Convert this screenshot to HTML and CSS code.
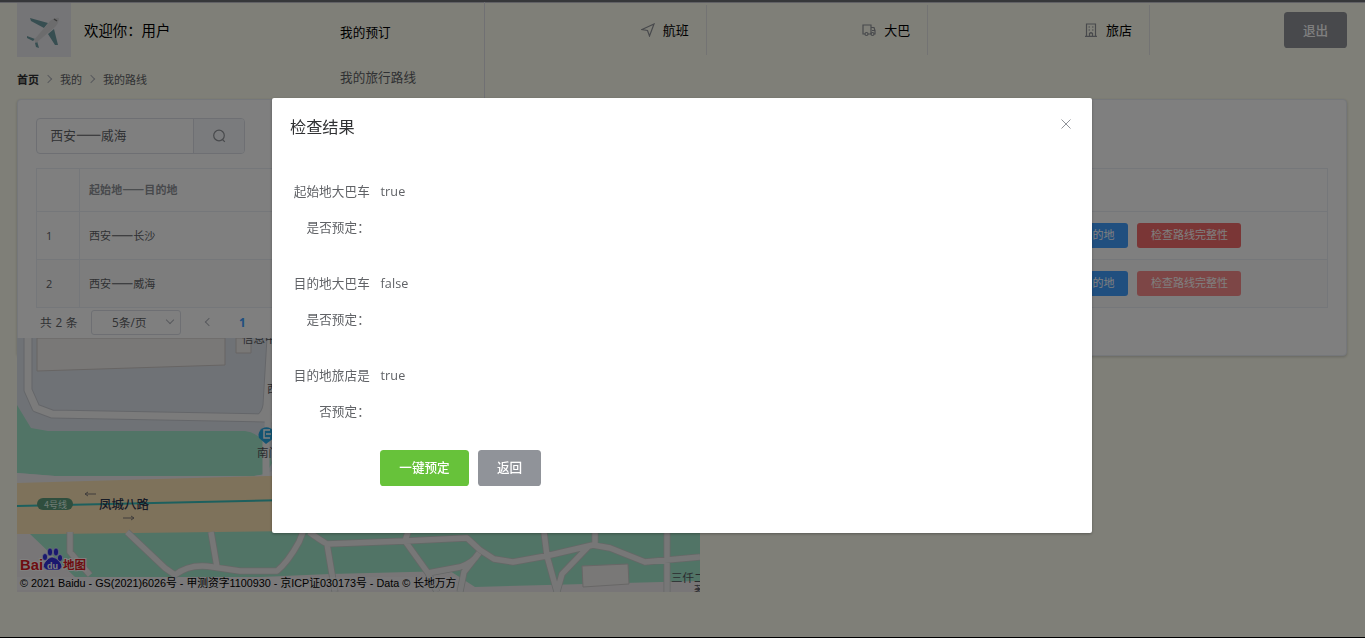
FILE: index.html
```html
<!DOCTYPE html>
<html lang="zh-CN">
<head>
<meta charset="utf-8">
<title>我的路线</title>
<link rel="stylesheet" href="styles.css">
</head>
<body>
<div class="page">
  <header class="header">
    <svg class="avatar" viewBox="0 0 54 54">
      <rect width="54" height="54" fill="#eaeaee"/>
      <path d="M13 15 L31 20 L27 25 L14 18Z M37 26 L41 42 L38 42 L31 31Z M10 33 L18 36 L16 38 L10 35Z M20 38 L22 45 L19 44 L18 40Z" fill="#6f9ca3"/>
      <path d="M17 37 L33 18 Q38 14 42 15 Q42 20 38 24 L19 40 Z" fill="#d9d9db"/>
      <path d="M37 16 L40 18" stroke="#777" stroke-width="1.5"/>
    </svg>
    <span class="welcome">欢迎你：用户</span>
    <nav class="submenu"><a class="sub-active">我的预订</a><a>我的旅行路线</a></nav>
    <nav class="menu">
      <a><svg class="icon" viewBox="0 0 14 14"><path d="M1 6.500 13 1 8.500 13 6.500 7.500Z"/></svg>航班</a>
      <a><svg class="icon" viewBox="0 0 14 14"><path d="M3 11H1V2h8v9H6M9 4.500h3l1 3V11H12M10 7.500h3"/><circle cx="4.500" cy="11" r="1.500"/><circle cx="10.500" cy="11" r="1.500"/></svg>大巴</a>
      <a><svg class="icon" viewBox="0 0 14 14"><path d="M1 13.400h12M2.500 13V1h9v12M5.500 13v-2.500q1.500-1.500 3 0V13M4.500 4h1.500M8 4h1.500M4.500 7h1.500M8 7h1.500"/></svg>旅店</a>
    </nav>
    <button class="btn info logout">退出</button>
  </header>
  <nav class="crumbs"><b>首页</b><i class="arrow"></i><span>我的</span><i class="arrow"></i><span>我的路线</span></nav>
  <main class="card">
    <div class="search">
      <div class="search-input">西安<span class="dash">——</span>威海</div>
      <div class="search-btn"><svg class="icon" viewBox="0 0 14 14"><circle cx="7" cy="6.500" r="5.300"/><path d="m10.500 10.500 2.300 2.300"/></svg></div>
    </div>
    <div class="table">
      <div class="row head"><div class="num"></div><div class="route">起始地<span class="dash">——</span>目的地</div></div>
      <div class="row"><div class="num">1</div><div class="route">西安<span class="dash">——</span>长沙</div><div class="ops"><span class="mini blue">目的地</span><span class="mini red">检查路线完整性</span></div></div>
      <div class="row striped"><div class="num">2</div><div class="route">西安<span class="dash">——</span>威海</div><div class="ops"><span class="mini blue">目的地</span><span class="mini red disabled">检查路线完整性</span></div></div>
    </div>
    <div class="pager"><span class="total">共 2 条</span><span class="select">5条/页<i class="arrow down"></i></span><i class="arrow prev"></i><b class="current">1</b></div>
  </main>
  <section class="map">
    <svg viewBox="17 338 683 254">
      <rect x="17" y="338" width="683" height="254" fill="#dfe5ec"/>
      <path d="M17 405 31 428 48 431H245Q260 433 268 448L272 463 266 474 254 476H55L17 473Z" fill="#a3e8cc"/>
      <path d="M17 473 55 476H254L266 474 274 470V484L17 484Z" fill="#f1eff0"/>
      <path d="M37 338H225V365L37 371Z M236 338h15v15h-15z" fill="#f3f0ee" stroke="#cfcac8"/>
      <g fill="none" stroke-linejoin="round">
        <path d="M28 338V390L36 408 52 414 265 418Q276 418 282 425M271 338 267 405Q266 413 260 418" stroke="#c9ccd3" stroke-width="9"/>
        <path d="M28 338V390L36 408 52 414 265 418Q276 418 282 425M271 338 267 405Q266 413 260 418M269 380 268 430M281 418V478M282 340V420" stroke="#f6f6f6" stroke-width="7"/>
        <path d="M266 432V476" stroke="#f6f6f6" stroke-width="7"/>
      </g>
      <path d="M17 483 268 476 700 466V534H17Z" fill="#fce4b6"/>
      <path d="M17 506 700 491" stroke="#3bc0bd" stroke-width="2"/>
      <path d="M17 534H700V592H17Z" fill="#f0edee"/>
      <path d="M30 534 75 577H260L330 574 450 571 475 587 700 581V531H300L54 534Z" fill="#a3e8cc"/>
      <g class="roads-edge"><use href="#roads"/></g>
      <g class="roads-fill"><path id="roads" d="M70 532V552L90 575M127 532 165 568 175 575Q190 563 213 567L240 571 277 571Q288 562 299 542L303 532M211 532 217 567M309 532Q320 540 327 544L405 541 408 532M327 544 335 592M405 541 428 573 460 567Q473 563 479 553M405 541 467 538 480 550 494 559 513 562 546 556 593 545 610 548 645 562 700 557M544 532 547 556 557 592M588 547 562 574 557 592M595 532V546M667 532V592M479 553 464 572 460 592M428 573 437 592"/></g>
      <path d="M582 566 628 564 629 584 583 587Z" fill="#f3f0ee" stroke="#d0cecd"/>
      <rect x="37" y="498" width="36" height="12" rx="6" fill="#5e9c7c"/>
      <g class="map-label"><text x="44" y="508" class="line-label">4号线</text><text x="99" y="509" class="road-label">凤城八路</text><text x="242" y="343">信息中</text><text x="267" y="393">西</text><text x="257" y="457">南门</text><text x="671" y="582">三仟二</text><text x="694" y="594" class="tiny">著</text></g>
      <path d="M96 494H85l3-2m-3 2 3 2M123 518h11l-3-2m3 2-3 2" fill="none" stroke="#807b78"/>
      <path d="M266 444 259 438A8 8 0 1 1 274 438Z" fill="#27a9e5"/><path d="M270 430h-6v8h6m-4-4h5" fill="none" stroke="white" stroke-width="1.500"/>
      <g class="logo"><text x="20" y="570" textLength="23" lengthAdjust="spacingAndGlyphs">Bai</text><text x="63" y="569" class="logo-cn">地图</text></g>
      <g fill="#3431df" stroke="white" stroke-width=".6"><ellipse cx="45" cy="557" rx="2.600" ry="3.500"/><ellipse cx="50" cy="552" rx="2.700" ry="4"/><ellipse cx="56" cy="552" rx="2.700" ry="4"/><ellipse cx="60" cy="558" rx="2.600" ry="3.500"/><path d="M52 557Q56 557 60 562 64 567 59 570H47Q41 567 45 562 49 557 52 557Z"/></g>
      <text x="47" y="569" class="du">du</text>
    </svg>
    <div class="copyright">© 2021 Baidu - GS(2021)6026号 - 甲测资字1100930 - 京ICP证030173号 - Data © 长地万方</div>
  </section>
</div>
<div class="overlay">
  <div class="dialog">
    <div class="dialog-head"><span>检查结果</span><svg class="close" viewBox="0 0 10 10"><path d="m.5.5 9 9M9.500.5.5 9.500"/></svg></div>
    <div class="form">
      <div class="item"><label>起始地大巴车是否预定：</label><span>true</span></div>
      <div class="item"><label>目的地大巴车是否预定：</label><span>false</span></div>
      <div class="item"><label>目的地旅店是否预定：</label><span>true</span></div>
      <div class="actions"><button class="btn success">一键预定</button><button class="btn info">返回</button></div>
    </div>
  </div>
</div>
</body>
</html>
```
FILE: styles.css
```css
* { box-sizing: border-box; }
body { margin: 0; height: 638px; overflow: hidden; background: #fffff0; font: 12.6px "Open Sans", "Noto Sans CJK SC", sans-serif; color: #606266; }
.page { height: 638px; padding: 1px 18px 0 17px; border-top: 2px solid #6c6e74; border-bottom: 1px solid #000; box-shadow: inset 0 1px #c3c2cb; position: relative; }
.header { display: flex; height: 54px; color: #000; }
.avatar { width: 54px; height: 54px; }
.welcome { width: 269px; padding-left: 13px; line-height: 56px; font-size: 14.4px; }
.submenu { width: 145px; height: 96px; margin-top: -1px; padding-top: 8px; border-right: 1px solid #e0e0e6; display: flex; flex-direction: column; color: #606266; flex: none; line-height: 45px; letter-spacing: .1px; }
.sub-active { color: #000; }
.menu { display: flex; }
.menu a { width: 221.7px; height: 50px; margin-top: 2px; border-right: 1px solid #e6e6e6; display: flex; align-items: center; justify-content: flex-end; padding: 0 17px 1px 0; gap: 8px; font-size: 13px; }
.icon { width: 14px; height: 14px; fill: none; stroke: #909399; stroke-width: 1.2; }
.menu .icon { margin-top: 1px; }
.btn { height: 36px; padding: 0 0 2px; border: 0; border-radius: 3.6px; color: #fff; font: 500 12.6px "Open Sans", "Noto Sans CJK SC", sans-serif; white-space: nowrap; }
.info { background: #909399; }
.success { background: #67c23a; }
.logout { margin: 9px 0 0 auto; width: 63px; }
.crumbs { display: flex; align-items: center; height: 16px; margin-top: 14px; font-size: 11px; }
.crumbs b { color: #303133; }
.arrow { width: 6px; height: 6px; border: solid #b0b3bb; border-width: 1px 1px 0 0; transform: rotate(45deg); margin: 0 9px 0 6px; flex: none; }
.card { height: 257px; margin-top: 12px; padding: 18px; background: #fff; border: 1px solid #ebeef5; border-radius: 4px; box-shadow: 0 1px 3px rgba(0,0,0,.2); }
.search { display: flex; width: 209px; height: 36px; border: 1px solid #dcdfe6; border-radius: 4px; line-height: 32px; overflow: hidden; }
.search-input { width: 156px; padding-left: 13.5px; font-family: "Noto Sans CJK SC", sans-serif; letter-spacing: .1px; }
.dash { letter-spacing: 0; -webkit-text-stroke: .3px currentColor; }
.search-btn { flex: 1; background: #f5f7fa; border-left: 1px solid #dcdfe6; display: grid; place-items: center; }
.table { margin-top: 14px; border: 1px solid #ebeef5; border-bottom: 0; font-size: 11px; width: 1292px; }
.row { display: flex; height: 48px; border-bottom: 1px solid #ebeef5; align-items: center; }
.head { height: 43px; color: #909399; font-weight: 700; }
.striped { background: #fafafa; }
.num { width: 43px; height: 100%; border-right: 1px solid #ebeef5; padding: 0 0 1px 9px; display: flex; align-items: center; }
.route { padding: 0 0 2px 9px; width: 987px; font-family: "Noto Sans CJK SC", sans-serif; letter-spacing: .1px; }
.ops { display: flex; gap: 9px; }
.mini { height: 25px; line-height: 24px; border-radius: 3px; color: #fff; text-align: center; text-indent: 1px; }
.blue { width: 61px; background: #409eff; }
.red { width: 104px; background: #f56c6c; }
.disabled { background: #fa8c8c; }
.pager { display: flex; align-items: center; height: 28px; font-size: 11.8px; padding-left: 4px; }
.total { width: 51px; padding-bottom: 1px; word-spacing: .6px; }
.select { width: 90px; height: 25px; border: 1px solid #dcdfe6; border-radius: 3px; padding: 0 7px 1px 20px; display: flex; align-items: center; justify-content: space-between; }
.down { transform: rotate(135deg); margin: -3px 0 0; }
.prev { transform: rotate(-135deg); margin: 0 27px 0 25px; }
.current { color: #409eff; padding-bottom: 1px; }
.map { position: absolute; left: 17px; top: 336px; width: 683px; height: 254px; overflow: hidden; }
.map svg { display: block; width: 683px; height: 254px; }
#roads { fill: none; stroke-linejoin: round; }
.roads-edge { stroke: #cbcfcd; stroke-width: 7; }
.roads-fill { stroke: #efefef; stroke-width: 5.4; }
.map-label { fill: #54565d; font: 11.5px "Noto Sans CJK SC", sans-serif; }
.road-label { fill: #2f374d; font-size: 12.5px; font-weight: 500; }
.line-label { fill: #dff7e9; font-size: 9px; }
.tiny { font-size: 10px; }
.logo { fill: #dd1a22; stroke: #fff; stroke-width: 2; paint-order: stroke; font: 700 14px "Liberation Sans", sans-serif; }
.logo-cn { font: 700 11.5px "Noto Sans CJK SC", sans-serif; }
.du { fill: #fff; font: 700 9px "Liberation Sans", sans-serif; }
.copyright { position: absolute; left: 0; bottom: 2px; height: 13px; padding-left: 3px; font: 10.8px/13px "Liberation Sans", "Noto Sans CJK SC", sans-serif; color: #000; background: rgba(255,255,255,.35); white-space: nowrap; }
.overlay { position: fixed; inset: 0; background: rgba(0,0,0,.5); display: flex; justify-content: center; align-items: flex-start; }
.dialog { width: 820px; height: 435px; margin: 98px 1px 0 0; background: #fff; border-radius: 2px; box-shadow: 0 1px 3px rgba(0,0,0,.3); padding: 18px; }
.dialog-head { display: flex; justify-content: space-between; height: 58px; color: #303133; font-size: 16.2px; line-height: 22px; }
.close { width: 10px; height: 10px; margin: 3px 3px 0 0; stroke: #909399; fill: none; }
.item { display: flex; height: 91.8px; line-height: 36px; letter-spacing: .1px; }
.item label { width: 90.5px; padding-right: 10.6px; text-align: right; flex: none; }
.actions { display: flex; gap: 9px; padding-left: 90px; margin-top: .6px; }
.actions .success { width: 89px; }
.actions .info { width: 63px; }
```
